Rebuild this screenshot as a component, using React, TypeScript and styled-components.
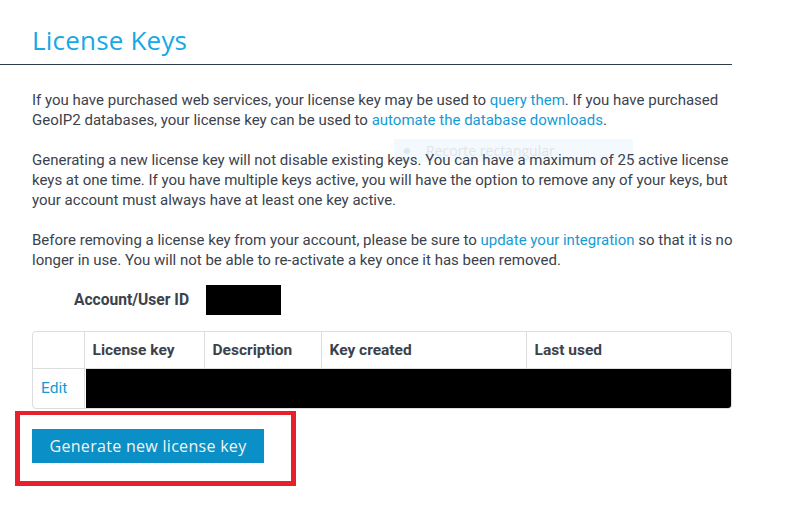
import React from "react";
import styled, { createGlobalStyle } from "styled-components";

const Global = createGlobalStyle`
  html, body { margin: 0; padding: 0; background: #fff; }
  body { font-family: Roboto, "Liberation Sans", sans-serif; color: #3b424c; font-size: 15px; }
  * { box-sizing: border-box; }
`;

const Page = styled.div`
  position: relative;
  width: 788px;
  height: 512px;
  overflow: hidden;
  padding-top: 25px;
`;

const Header = styled.div`
  position: relative;
  z-index: 1;
  width: 732px;
  border-bottom: 1px solid #2e3d4a;
  padding: 0 0 8px 32px;
`;

const Title = styled.h1`
  margin: 0;
  font-family: "Open Sans", "Liberation Sans", sans-serif;
  font-weight: 400;
  font-size: 26px;
  line-height: 31px;
  color: #17a8e6;
  letter-spacing: 0.2px;
`;

const Content = styled.div`
  position: relative;
  z-index: 1;
  width: 740px;
  padding: 25px 0 0 32px;
`;

const Para = styled.p`
  margin: 0 0 20px;
  width: 703px;
  font-size: 15px;
  line-height: 20px;
  color: #3b424c;
`;

const Link = styled.a`
  color: #139bd6;
  text-decoration: none;
`;

const AccountRow = styled.div`
  display: flex;
  align-items: center;
  gap: 17px;
  margin-top: -5px;
  padding-left: 42px;
`;

const AccountLabel = styled.span`
  font-weight: 700;
  font-size: 15.6px;
  color: #3b424c;
`;

const Redacted = styled.div<{ $w: number; $h: number }>`
  width: ${(p) => p.$w}px;
  height: ${(p) => p.$h}px;
  background: #000;
`;

const TableWrap = styled.div`
  margin-top: 16px;
  width: 700px;
  border: 1px solid #dddddd;
  border-radius: 4px;
  overflow: hidden;
`;

const Table = styled.table`
  width: 100%;
  border-collapse: collapse;
  table-layout: fixed;
`;

const Th = styled.th<{ $w?: number }>`
  ${(p) => (p.$w ? `width: ${p.$w}px;` : "")}
  height: 36px;
  text-align: left;
  padding: 0 8px;
  font-size: 15.5px;
  font-weight: 700;
  color: #3b424c;
  border-left: 1px solid #dddddd;
  border-bottom: 1px solid #dddddd;
  &:first-child { border-left: none; }
`;

const Td = styled.td`
  height: 39px;
  padding: 0 8px;
  font-size: 15.5px;
  &:first-child { border-right: 1px solid #dddddd; }
`;

const BlackCell = styled.td`
  padding: 0 0 0 1px;
  height: 39px;
`;

const Fill = styled.div`
  height: 40px;
  margin-bottom: -1px;
  background: #000;
`;

const Button = styled.button`
  margin-top: 20px;
  width: 232px;
  height: 34px;
  border: none;
  background: #0a8fc7;
  color: #f4f4ef;
  font-family: "Open Sans", "Liberation Sans", sans-serif;
  font-size: 16px;
  letter-spacing: 0.3px;
  padding: 0;
  cursor: pointer;
`;

const Highlight = styled.div`
  position: absolute;
  z-index: 2;
  left: 15px;
  top: 411px;
  width: 281px;
  height: 75px;
  border: 5px solid #e8202a;
  border-top-width: 4px;
`;

const Ghost = styled.div`
  position: absolute;
  z-index: 0;
  left: 394px;
  top: 139px;
  width: 239px;
  height: 23px;
  background: #f4f9fe;
  display: flex;
  align-items: center;
  gap: 16px;
  padding-left: 10px;
  font-family: "Open Sans", "Liberation Sans", sans-serif;
  font-size: 14px;
  color: #e1e5ea;
`;

const Dot = styled.span`
  width: 6px;
  height: 6px;
  border-radius: 50%;
  background: #e2e6ea;
`;

export default function App() {
  return (
    <Page>
      <Global />
      <Ghost>
        <Dot />
        <span>Recorte rectangular</span>
      </Ghost>
      <Header>
        <Title>License Keys</Title>
      </Header>
      <Content>
        <Para>
          If you have purchased web services, your license key may be used to{" "}
          <Link>query them</Link>. If you have purchased GeoIP2 databases, your license key can be used to{" "}
          <Link>automate the database downloads</Link>.
        </Para>
        <Para>
          Generating a new license key will not disable existing keys. You can have a maximum of 25 active license
          keys at one time. If you have multiple keys active, you will have the option to remove any of your keys, but
          your account must always have at least one key active.
        </Para>
        <Para>
          Before removing a license key from your account, please be sure to <Link>update your integration</Link> so
          that it is no longer in use. You will not be able to re-activate a key once it has been removed.
        </Para>
        <AccountRow>
          <AccountLabel>Account/User ID</AccountLabel>
          <Redacted $w={75} $h={30} />
        </AccountRow>
        <TableWrap>
          <Table>
            <thead>
              <tr>
                <Th $w={51}></Th>
                <Th $w={120}>License key</Th>
                <Th $w={117}>Description</Th>
                <Th $w={205}>Key created</Th>
                <Th>Last used</Th>
              </tr>
            </thead>
            <tbody>
              <tr>
                <Td>
                  <Link>Edit</Link>
                </Td>
                <BlackCell colSpan={4}>
                  <Fill />
                </BlackCell>
              </tr>
            </tbody>
          </Table>
        </TableWrap>
        <Button>Generate new license key</Button>
      </Content>
      <Highlight />
    </Page>
  );
}
